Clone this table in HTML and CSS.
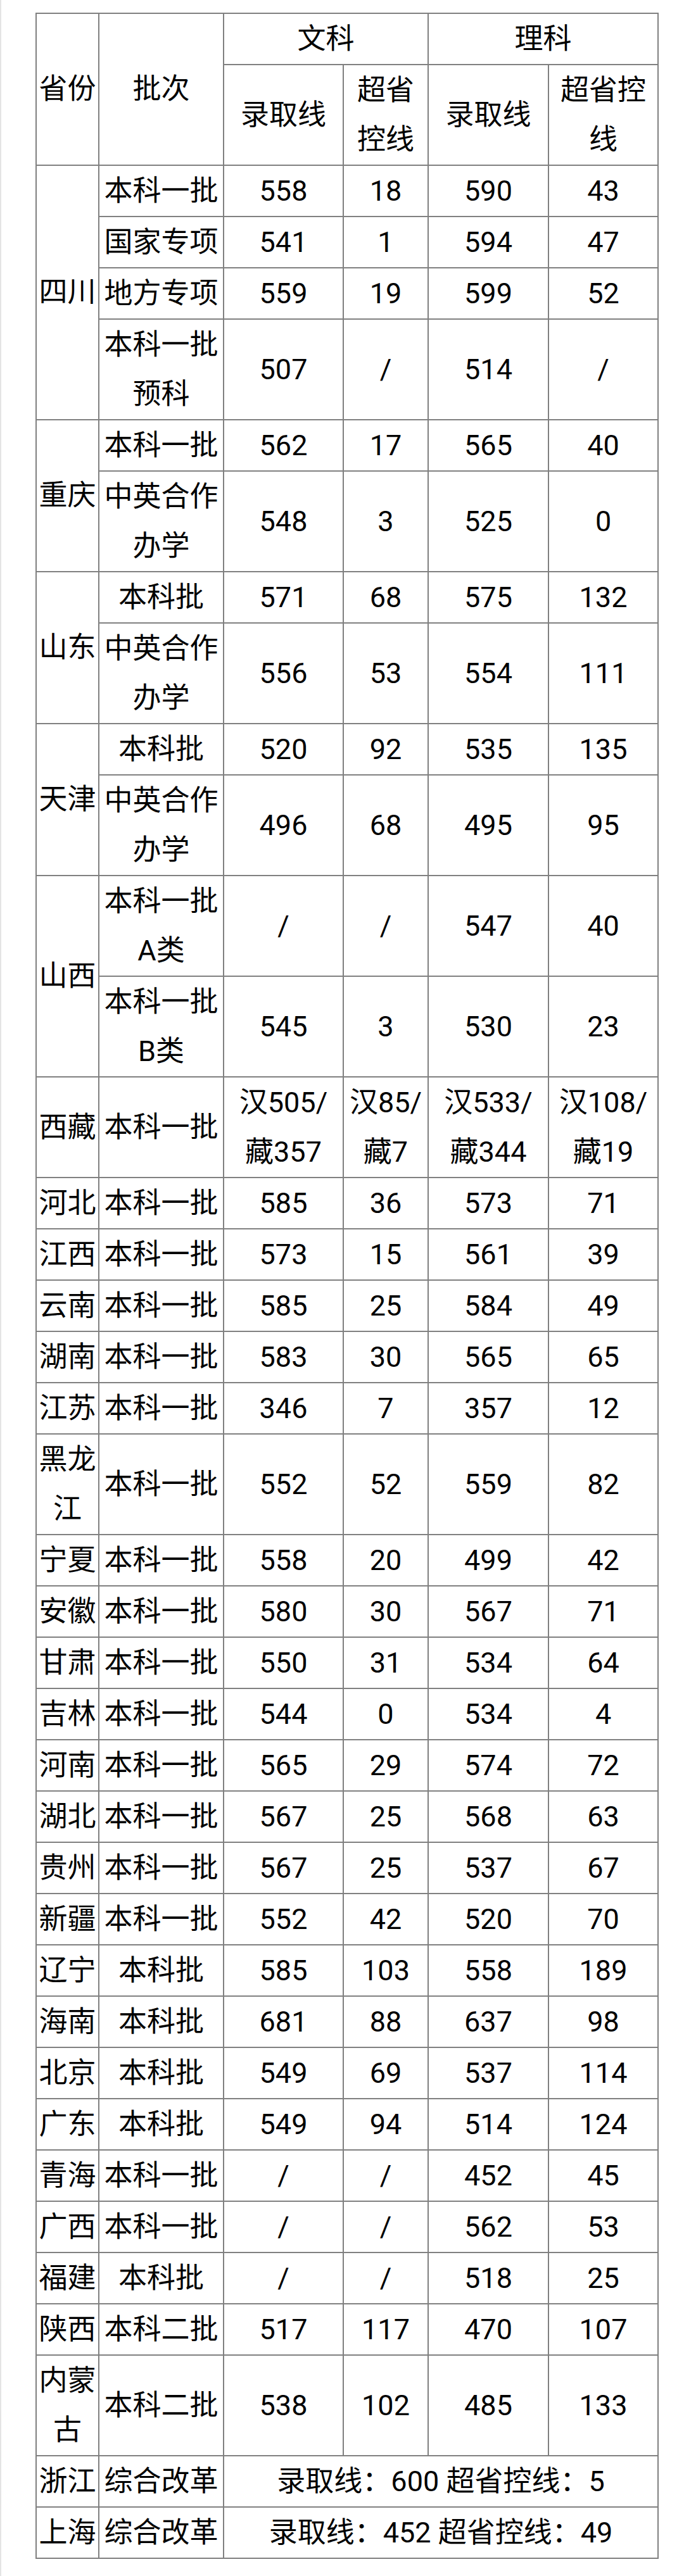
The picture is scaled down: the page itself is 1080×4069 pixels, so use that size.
FILE: index.html
```html
<!DOCTYPE html>
<html lang="zh-CN">
<head>
<meta charset="utf-8">
<title>录取线</title>
<link rel="stylesheet" href="styles.css">
</head>
<body>
<div class="page">
<table class="scores">
<colgroup>
<col class="c-prov"><col class="c-batch"><col class="c-wl"><col class="c-wc"><col class="c-ll"><col class="c-lc">
</colgroup>
<thead>
<tr><th rowspan="2">省份</th><th rowspan="2">批次</th><th colspan="2">文科</th><th colspan="2">理科</th></tr>
<tr><th>录取线</th><th>超省<br>控线</th><th>录取线</th><th>超省控<br>线</th></tr>
</thead>
<tbody>
<tr><td rowspan="4">四川</td><td>本科一批</td><td>558</td><td>18</td><td>590</td><td>43</td></tr>
<tr><td>国家专项</td><td>541</td><td>1</td><td>594</td><td>47</td></tr>
<tr><td>地方专项</td><td>559</td><td>19</td><td>599</td><td>52</td></tr>
<tr><td>本科一批<br>预科</td><td>507</td><td>/</td><td>514</td><td>/</td></tr>
<tr><td rowspan="2">重庆</td><td>本科一批</td><td>562</td><td>17</td><td>565</td><td>40</td></tr>
<tr><td>中英合作<br>办学</td><td>548</td><td>3</td><td>525</td><td>0</td></tr>
<tr><td rowspan="2">山东</td><td>本科批</td><td>571</td><td>68</td><td>575</td><td>132</td></tr>
<tr><td>中英合作<br>办学</td><td>556</td><td>53</td><td>554</td><td>111</td></tr>
<tr><td rowspan="2">天津</td><td>本科批</td><td>520</td><td>92</td><td>535</td><td>135</td></tr>
<tr><td>中英合作<br>办学</td><td>496</td><td>68</td><td>495</td><td>95</td></tr>
<tr><td rowspan="2">山西</td><td>本科一批<br>A类</td><td>/</td><td>/</td><td>547</td><td>40</td></tr>
<tr><td>本科一批<br>B类</td><td>545</td><td>3</td><td>530</td><td>23</td></tr>
<tr><td>西藏</td><td>本科一批</td><td>汉505/<br>藏357</td><td>汉85/<br>藏7</td><td>汉533/<br>藏344</td><td>汉108/<br>藏19</td></tr>
<tr><td>河北</td><td>本科一批</td><td>585</td><td>36</td><td>573</td><td>71</td></tr>
<tr><td>江西</td><td>本科一批</td><td>573</td><td>15</td><td>561</td><td>39</td></tr>
<tr><td>云南</td><td>本科一批</td><td>585</td><td>25</td><td>584</td><td>49</td></tr>
<tr><td>湖南</td><td>本科一批</td><td>583</td><td>30</td><td>565</td><td>65</td></tr>
<tr><td>江苏</td><td>本科一批</td><td>346</td><td>7</td><td>357</td><td>12</td></tr>
<tr><td>黑龙<br>江</td><td>本科一批</td><td>552</td><td>52</td><td>559</td><td>82</td></tr>
<tr><td>宁夏</td><td>本科一批</td><td>558</td><td>20</td><td>499</td><td>42</td></tr>
<tr><td>安徽</td><td>本科一批</td><td>580</td><td>30</td><td>567</td><td>71</td></tr>
<tr><td>甘肃</td><td>本科一批</td><td>550</td><td>31</td><td>534</td><td>64</td></tr>
<tr><td>吉林</td><td>本科一批</td><td>544</td><td>0</td><td>534</td><td>4</td></tr>
<tr><td>河南</td><td>本科一批</td><td>565</td><td>29</td><td>574</td><td>72</td></tr>
<tr><td>湖北</td><td>本科一批</td><td>567</td><td>25</td><td>568</td><td>63</td></tr>
<tr><td>贵州</td><td>本科一批</td><td>567</td><td>25</td><td>537</td><td>67</td></tr>
<tr><td>新疆</td><td>本科一批</td><td>552</td><td>42</td><td>520</td><td>70</td></tr>
<tr><td>辽宁</td><td>本科批</td><td>585</td><td>103</td><td>558</td><td>189</td></tr>
<tr><td>海南</td><td>本科批</td><td>681</td><td>88</td><td>637</td><td>98</td></tr>
<tr><td>北京</td><td>本科批</td><td>549</td><td>69</td><td>537</td><td>114</td></tr>
<tr><td>广东</td><td>本科批</td><td>549</td><td>94</td><td>514</td><td>124</td></tr>
<tr><td>青海</td><td>本科一批</td><td>/</td><td>/</td><td>452</td><td>45</td></tr>
<tr><td>广西</td><td>本科一批</td><td>/</td><td>/</td><td>562</td><td>53</td></tr>
<tr><td>福建</td><td>本科批</td><td>/</td><td>/</td><td>518</td><td>25</td></tr>
<tr><td>陕西</td><td>本科二批</td><td>517</td><td>117</td><td>470</td><td>107</td></tr>
<tr><td>内蒙<br>古</td><td>本科二批</td><td>538</td><td>102</td><td>485</td><td>133</td></tr>
<tr><td>浙江</td><td>综合改革</td><td colspan="4">录取线：600 超省控线：5</td></tr>
<tr><td>上海</td><td>综合改革</td><td colspan="4">录取线：452 超省控线：49</td></tr>
</tbody>
</table>
</div>
</body>
</html>
```
FILE: styles.css
```css
html, body {
  margin: 0;
  padding: 0;
  background: #ffffff;
}

.page {
  min-height: 4069px;
  box-sizing: border-box;
  border-left: 2px solid #e4e4e4;
  padding: 20px 0 0 54px;
}

.scores {
  border-collapse: collapse;
  table-layout: fixed;
  width: 982px;
  font-family: "Roboto", "Noto Sans CJK SC", sans-serif;
  font-size: 45px;
  color: #000000;
}

.c-prov { width: 99px; }
.c-batch { width: 197px; }
.c-wl { width: 189px; }
.c-wc { width: 134px; }
.c-ll { width: 190px; }
.c-lc { width: 173px; }

.scores th,
.scores td {
  border: 2px solid #808080;
  padding: 0.5px 0;
  line-height: 78px;
  text-align: center;
  vertical-align: middle;
  font-weight: normal;
  white-space: nowrap;
  overflow: visible;
}
```
